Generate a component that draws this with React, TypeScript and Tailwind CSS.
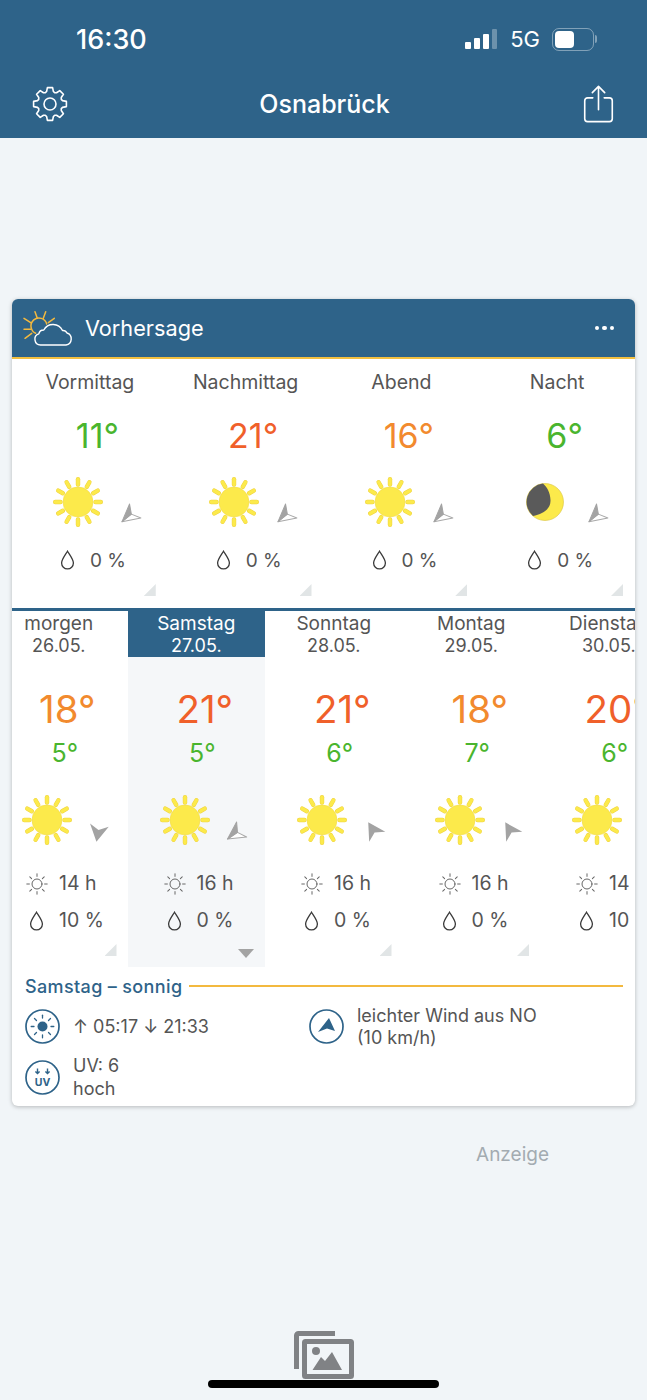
const BLUE = "#2e6389";

const SunIcon = () => {
  const rays = [0, 30, 60, 90, 120, 150, 180, 210, 240, 270, 300, 330];
  return (
    <svg width="50" height="50" viewBox="0 0 50 50" className="shrink-0">
      {rays.map((a) => (
        <line key={a} x1="25" y1="7.5" x2="25" y2="2.2" transform={`rotate(${a} 25 25)`} stroke="#efd343" strokeWidth="4.4" strokeLinecap="round" />
      ))}
      {rays.map((a) => (
        <line key={a} x1="25" y1="7.5" x2="25" y2="2.2" transform={`rotate(${a} 25 25)`} stroke="#fcea4b" strokeWidth="3.4" strokeLinecap="round" />
      ))}
      <circle cx="25" cy="25" r="15" fill="#fcea4b" stroke="#f3dc46" strokeWidth="0.6" />
    </svg>
  );
};

const MoonIcon = () => (
  <div className="flex h-[50px] w-[50px] shrink-0 items-center justify-center">
    <svg width="38" height="38" viewBox="0 0 38 38">
      <circle cx="19" cy="19" r="18.5" fill="#fcea4b" stroke="#d9c23c" strokeWidth="0.6" />
      <path d="M17 0.6 A18.5 18.5 0 0 0 7 33 C17 31 25 26 24.5 17 C24.3 10 21 4 17 0.6 Z" fill="#5a5a5a" />
    </svg>
  </div>
);

const WindArrow = ({ angle, solid, className }: { angle: number; solid?: boolean; className: string }) => (
  <svg width="24" height="24" viewBox="0 0 24 24" className={`shrink-0 overflow-visible ${className}`}>
    <g transform={`rotate(${angle} 12 12)`}>
      {solid ? (
        <path d="M12 3 L21.5 20 L12 15 L2.5 20 Z" fill="#a3a3a3" />
      ) : (
        <>
          <path d="M12 3 L3 20 L12 15 Z" fill="#fff" stroke="#a8a8a8" strokeWidth="1" strokeLinejoin="round" />
          <path d="M12 3 L21 20 L12 15 Z" fill="#a3a3a3" stroke="#a3a3a3" strokeWidth="1" strokeLinejoin="round" />
        </>
      )}
    </g>
  </svg>
);

const Drop = () => (
  <svg width="15" height="20" viewBox="0 0 15 20" className="shrink-0">
    <path d="M7.5 1.2 C6 4 1.6 9.4 1.6 13 a5.9 5.9 0 0 0 11.8 0 C13.4 9.4 9 4 7.5 1.2 Z" fill="none" stroke="#3a3a3a" strokeWidth="1.3" />
  </svg>
);

const SmallSun = () => (
  <svg width="22" height="22" viewBox="0 0 22 22" className="shrink-0" stroke="#666" strokeWidth="1" fill="none" strokeLinecap="round">
    <circle cx="11" cy="11" r="5" />
    {[0, 45, 90, 135, 180, 225, 270, 315].map((a) => (
      <line key={a} x1="11" y1="3.4" x2="11" y2="0.8" transform={`rotate(${a} 11 11)`} />
    ))}
  </svg>
);

// 8 tooth gear outline, points worked out from angle + radius
const gearPoints = [0, 45, 90, 135, 180, 225, 270, 315]
  .flatMap((t) =>
    [
      [-15, 13],
      [-9, 16.6],
      [9, 16.6],
      [15, 13],
      [22.5, 12.2],
    ].map(([d, r]) => {
      const rad = ((t + d - 90) * Math.PI) / 180;
      return `${(18 + r * Math.cos(rad)).toFixed(2)},${(18 + r * Math.sin(rad)).toFixed(2)}`;
    })
  )
  .join(" ");

const GearIcon = () => (
  <svg width="36" height="36" viewBox="0 0 36 36" fill="none" stroke="#fff" strokeWidth="1.6" strokeLinejoin="round">
    <polygon points={gearPoints} />
    <circle cx="18" cy="18" r="6" />
  </svg>
);

const Corner = () => (
  <div className="h-[12px] w-[12px] bg-[#e1e5e6] [clip-path:polygon(100%_0,100%_100%,0_100%)]" />
);

const periods = [
  { name: "Vormittag", temp: "11°", color: "text-[#4ab52e]" },
  { name: "Nachmittag", temp: "21°", color: "text-[#f0602a]" },
  { name: "Abend", temp: "16°", color: "text-[#f28a2e]" },
  { name: "Nacht", temp: "6°", color: "text-[#4ab52e]", moon: true },
];

const days = [
  { name: "morgen", date: "26.05.", hi: "18°", hiColor: "text-[#f28a2e]", lo: "5°", angle: 190, solid: true, arrowTop: "mt-[26px]", sun: "14 h", rain: "10 %" },
  { name: "Samstag", date: "27.05.", hi: "21°", hiColor: "text-[#f0602a]", lo: "5°", angle: 236, selected: true, arrowTop: "mt-[27px]", sun: "16 h", rain: "0 %" },
  { name: "Sonntag", date: "28.05.", hi: "21°", hiColor: "text-[#f0602a]", lo: "6°", angle: 328, solid: true, arrowTop: "mt-[23px]", sun: "16 h", rain: "0 %" },
  { name: "Montag", date: "29.05.", hi: "18°", hiColor: "text-[#f28a2e]", lo: "7°", angle: 328, solid: true, arrowTop: "mt-[23px]", sun: "16 h", rain: "0 %" },
  { name: "Dienstag", date: "30.05.", hi: "20°", hiColor: "text-[#f0602a]", lo: "6°", angle: 328, solid: true, arrowTop: "mt-[23px]", sun: "14 h", rain: "10 %" },
];

const StatusBar = () => (
  <div className="flex h-[78px] items-center justify-between pl-[76px] pr-[50px] text-white">
    <span className="text-[27px] font-medium leading-none">16:30</span>
    <div className="flex items-center">
      <div className="flex items-end gap-[3px]">
        <div className="h-[7px] w-[6px] rounded-[1px] bg-white" />
        <div className="h-[11px] w-[6px] rounded-[1px] bg-white" />
        <div className="h-[15px] w-[6px] rounded-[1px] bg-white" />
        <div className="h-[20px] w-[5px] rounded-[1px] bg-white/30" />
      </div>
      <span className="ml-[13px] text-[22px] leading-none">5G</span>
      <div className="ml-[12px] flex items-center">
        <div className="h-[23px] w-[42px] rounded-[7px] border border-white/40 p-[2px]">
          <div className="h-full w-[19px] rounded-[4px] bg-white" />
        </div>
        <div className="ml-[1px] h-[8px] w-[2px] rounded-r-full bg-white/40" />
      </div>
    </div>
  </div>
);

const NavBar = () => (
  <div className="flex h-[52px] items-center justify-between pl-[32px] pr-[33px] text-white">
    <GearIcon />
    <span className="mr-[2px] text-[25px] font-medium leading-none">Osnabrück</span>
    <svg width="31" height="38" viewBox="0 0 32 40" fill="none" stroke="#fff" strokeWidth="1.7" strokeLinecap="round" strokeLinejoin="round">
      <path d="M10 13.5 H4.5 a3 3 0 0 0 -3 3 V35.5 a3 3 0 0 0 3 3 H27.5 a3 3 0 0 0 3 -3 V16.5 a3 3 0 0 0 -3 -3 H22" />
      <path d="M16 26 V1.5 M9.5 8 L16 1.5 L22.5 8" />
    </svg>
  </div>
);

const PeriodCol = ({ p }: { p: (typeof periods)[number] }) => (
  <div className="flex w-1/4 flex-col">
    <div className="mt-[11px] h-[24px] text-center text-[19.5px] leading-[24px] text-[#555]">{p.name}</div>
    <div className={`mt-[22px] h-[40px] pl-[15px] text-center text-[34px] leading-[40px] ${p.color}`}>{p.temp}</div>
    <div className="mt-[21px] flex h-[50px] items-start gap-[14px] pl-[41px]">
      {p.moon ? <MoonIcon /> : <SunIcon />}
      <WindArrow angle={231} className="mt-[27px]" />
    </div>
    <div className="mt-[23px] flex h-[20px] items-center pl-[48px] text-[19px] leading-none text-[#555]">
      <Drop />
      <span className="ml-[15px]">0 %</span>
    </div>
    <div className="mt-[14px] flex justify-end pr-[12px]">
      <Corner />
    </div>
    <div className="h-[12px]" />
  </div>
);

const DayCol = ({ d, first }: { d: (typeof days)[number]; first?: boolean }) => (
  <div className={`flex w-[137.5px] shrink-0 flex-col ${first ? "-ml-[22px]" : ""} ${d.selected ? "bg-[#f5f7f9]" : ""}`}>
    <div className={`h-[46px] pt-[2px] text-center text-[18px] leading-[22px] ${d.selected ? "bg-[#2e6389] text-white" : "text-[#555]"}`}>
      <div className="text-[19px]">{d.name}</div>
      <div>{d.date}</div>
    </div>
    <div className={`mt-[30px] h-[44px] pl-[17px] text-center text-[38.5px] leading-[44px] ${d.hiColor}`}>{d.hi}</div>
    <div className="mt-[7px] h-[30px] pl-[12px] text-center text-[25px] leading-[30px] text-[#4ab52e]">{d.lo}</div>
    <div className="mt-[27px] flex h-[50px] items-start gap-[13.5px] pl-[32px]">
      <SunIcon />
      <WindArrow angle={d.angle} solid={d.solid} className={d.arrowTop} />
    </div>
    <div className="mt-[27px] flex h-[24px] items-center pl-[36px] text-[19.5px] leading-none text-[#555]">
      <SmallSun />
      <span className="ml-[11px]">{d.sun}</span>
    </div>
    <div className="mt-[13px] flex h-[24px] items-center pl-[39px] text-[19.5px] leading-none text-[#555]">
      <Drop />
      <span className="ml-[15px]">{d.rain}</span>
    </div>
    <div className="mt-[11px] flex h-[12px] justify-end pr-[11px]">
      {d.selected ? (
        <div className="mt-[5px] h-[9px] w-[16px] bg-[#a3a3a3] [clip-path:polygon(0_0,100%_0,50%_100%)]" />
      ) : (
        <Corner />
      )}
    </div>
    <div className="h-[11px]" />
  </div>
);

const Details = () => (
  <div className="px-[13px] pt-[7px] text-[18px] text-[#555]">
    <div className="flex h-[24px] items-center gap-[7px]">
      <span className="font-medium tracking-[0.02em] text-[#2e6389]">Samstag – sonnig</span>
      <div className="mr-[-1px] h-[2px] flex-1 bg-[#f3b93f]" />
    </div>
    <div className="mt-[6px] grid grid-cols-[284px_1fr]">
      <div className="flex h-[44px] items-center gap-[13px]">
        <svg width="35" height="35" viewBox="0 0 35 35" fill="none" stroke={BLUE} className="shrink-0">
          <circle cx="17.5" cy="17.5" r="16.5" strokeWidth="1.7" />
          <circle cx="17.5" cy="17.5" r="5" fill={BLUE} stroke="none" />
          {[0, 45, 90, 135, 180, 225, 270, 315].map((a) => (
            <line key={a} x1="17.5" y1="9" x2="17.5" y2="6.2" strokeWidth="1.3" strokeLinecap="round" transform={`rotate(${a} 17.5 17.5)`} />
          ))}
        </svg>
        <span>↑ 05:17 ↓ 21:33</span>
      </div>
      <div className="flex h-[44px] items-center gap-[13px]">
        <svg width="35" height="35" viewBox="0 0 35 35" fill="none" stroke={BLUE} className="shrink-0">
          <circle cx="17.5" cy="17.5" r="16.5" strokeWidth="1.7" />
          <path d="M20 9 L26 22 L18 19.5 L9 23 Z" fill={BLUE} stroke="none" />
        </svg>
        <div className="pt-[1px] leading-[22px]">
          <div>leichter Wind aus NO</div>
          <div>(10 km/h)</div>
        </div>
      </div>
      <div className="mt-[6px] flex h-[46px] items-center gap-[13px]">
        <svg width="35" height="35" viewBox="0 0 35 35" fill="none" stroke={BLUE} className="shrink-0">
          <circle cx="17.5" cy="17.5" r="16.5" strokeWidth="1.7" />
          <path d="M12.5 8.5 V13.5 M10.4 11.4 L12.5 13.5 L14.6 11.4 M22.5 8.5 V13.5 M20.4 11.4 L22.5 13.5 L24.6 11.4" strokeWidth="1.4" />
          <text x="17.5" y="25.5" textAnchor="middle" fill={BLUE} stroke="none" fontSize="10.5" fontWeight="700" fontFamily="Inter, sans-serif">UV</text>
        </svg>
        <div className="leading-[23px]">
          <div>UV: 6</div>
          <div>hoch</div>
        </div>
      </div>
    </div>
    <div className="h-[6px]" />
  </div>
);

export default function App() {
  return (
    <div className="relative h-[1400px] w-[647px] overflow-hidden bg-[#f1f5f8] font-['Inter',sans-serif]">
      <header className="h-[138px] bg-[#2e6389]">
        <StatusBar />
        <NavBar />
      </header>

      <section className="mx-[12px] mt-[161px] overflow-hidden rounded-[6px] bg-white shadow-[0_1px_4px_rgba(0,0,0,0.25)]">
        <div className="flex h-[60px] items-center justify-between border-b-2 border-[#f3c040] bg-[#2e6389] pl-[12px] pr-[21px] text-white">
          <div className="flex items-center gap-[11px]">
            <svg width="50" height="38" viewBox="0 0 50 38" fill="none" strokeLinecap="round" className="overflow-visible">
              <g stroke="#f3b93f" strokeWidth="1.5">
                <path d="M11.7 24.3 A8 8 0 1 1 22.7 15" />
                <path d="M11 2.7 L13.3 9.3 M21.7 2.7 L19.3 9.3 M30.3 9.3 L24.3 13.7 M0 9.3 L6.7 13.7 M0 20.3 L6.7 20.3 M1 29.3 L7.7 24.3" />
              </g>
              <path d="M16.5 36 A5.7 5.7 0 0 1 14.8 24.9 A5 5 0 0 1 19.8 21 A10.5 10.5 0 0 1 38.5 21.5 A4.5 4.5 0 0 1 43 24 A6.2 6.2 0 0 1 42 36 Z" stroke="#fff" strokeWidth="1.4" strokeLinejoin="round" />
            </svg>
            <span className="mt-[2px] text-[21.7px] leading-none">Vorhersage</span>
          </div>
          <div className="flex gap-[3px]">
            <div className="h-[4.5px] w-[4.5px] rounded-full bg-white" />
            <div className="h-[4.5px] w-[4.5px] rounded-full bg-white" />
            <div className="h-[4.5px] w-[4.5px] rounded-full bg-white" />
          </div>
        </div>

        <div className="flex">
          {periods.map((p) => (
            <PeriodCol key={p.name} p={p} />
          ))}
        </div>

        <div className="flex overflow-hidden border-t-[3px] border-[#2e6389]">
          {days.map((d, i) => (
            <DayCol key={d.name} d={d} first={i === 0} />
          ))}
        </div>

        <Details />
      </section>

      <div className="mr-[98px] mt-[38px] text-right text-[19px] leading-[22px] text-[#a3abb1]">Anzeige</div>

      <div className="mt-[165px] flex justify-center">
        <svg width="60" height="48" viewBox="0 0 60 48" fill="none" stroke="#808285" strokeWidth="5" strokeLinejoin="round">
          <path d="M2.5 38 V4.5 a2 2 0 0 1 2 -2 H41" />
          <rect x="10.5" y="10.5" width="47" height="35" rx="1" />
          <circle cx="22" cy="20" r="4" fill="#808285" stroke="none" />
          <path d="M18.5 39 L27 26 L31 30 L38 21 L48 39 Z" fill="#808285" stroke="none" />
        </svg>
      </div>

      <div className="absolute left-[208px] top-[1380px] h-[8px] w-[231px] rounded-full bg-black" />
    </div>
  );
}
